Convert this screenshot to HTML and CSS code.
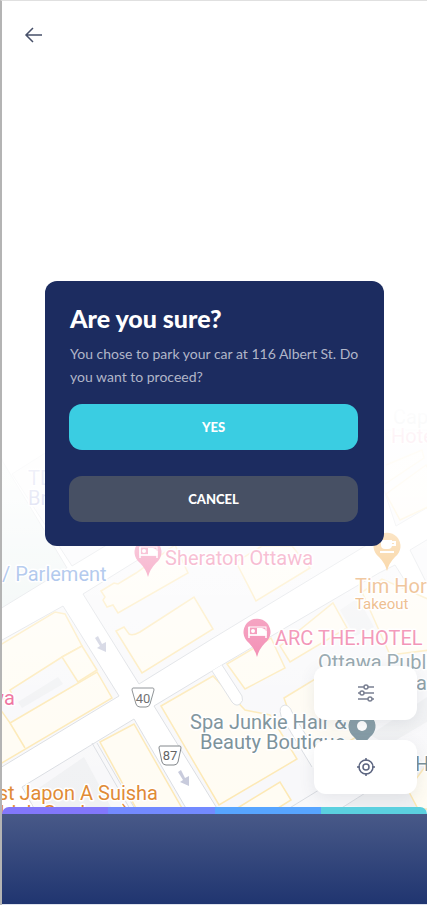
FILE: index.html
```html
<!DOCTYPE html>
<html lang="en">
<head>
<meta charset="utf-8">
<meta name="viewport" content="width=device-width, initial-scale=1">
<title>Park your car</title>
<link rel="stylesheet" href="styles.css">
</head>
<body>
<div class="screen">
  <div class="map">
    <svg class="map-art" viewBox="0 0 425 904" preserveAspectRatio="xMidYMax slice" role="img" aria-label="Street map of downtown Ottawa">
      <defs>
        <linearGradient id="fade" x1="0" y1="400" x2="0" y2="806" gradientUnits="userSpaceOnUse">
          <stop offset="0" stop-color="#fff"/>
          <stop offset=".1" stop-color="#fff" stop-opacity=".92"/>
          <stop offset=".22" stop-color="#fff" stop-opacity=".86"/>
          <stop offset=".38" stop-color="#fff" stop-opacity=".62"/>
          <stop offset=".58" stop-color="#fff" stop-opacity=".38"/>
          <stop offset=".75" stop-color="#fff" stop-opacity=".15"/>
          <stop offset="1" stop-color="#fff" stop-opacity=".02"/>
        </linearGradient>
        <g id="bed" fill="none" stroke="#fff" stroke-width="1.500">
          <path d="M-8-5V6M9-1V6M-8 3H9"/>
          <path d="M0-4H5Q9-3 9 0V3H0Z" fill="#fff" stroke="none"/>
          <rect x="-8" y="-5" width="17" height="8" stroke-width="1"/>
          <circle cx="-4" cy="-1" r="2" fill="#fff" stroke="none"/>
        </g>
        <path id="pin" d="M0 25Q-2 17-8 11A13.500 13.500 0 1 1 8 11Q2 17 0 25Z"/>
        <path id="arrow" d="M-6-6L-3-8 1 0 5-2 5 8-4 4-1 2Z" fill="#c5c8da"/>
      </defs>
      <g transform="translate(-2 -1)">
        <g class="block">
          <path d="M-5 440L3 462 67 568-5 612Z" fill="#edf4f3"/>
          <path d="M12 474L50 450 110 543 72 566Z"/>
          <path d="M83 594L175 537H380L342 560 215 637 139 684Z"/>
          <path d="M-5 644L63 606 119 696-5 771Z"/>
          <path d="M22 787L134 719 187 810H35Z"/>
          <path d="M154 706L222 665 379 573 395 565 430 620V810H218Z"/>
          <path d="M410 550L430 538V590Z"/>
          <path d="M384 490L396 526 430 506V430H384Z"/>
        </g>
        <g class="lot">
          <path d="M18 702L58 677 63 684 22 708Z"/>
          <path d="M340 610L358 598 374 627 355 636Z"/>
          <path d="M36 790L84 757 112 809H46Z"/>
          <path d="M345 806L420 758 430 775V810Z"/>
          <path d="M370 735L430 695V720L388 745Z"/>
        </g>
        <g class="building">
          <path d="M101 591L114 583 118 584 136 573 175 545 188 573 118 613 113 605 107 607 103 600 105 597Z"/>
          <path d="M116 631L124 627 129 634Q133 636 140 632L194 597 213 629 142 673Z"/>
          <path d="M-5 648L55 612 65 614 82 646 62 657 10 690 12 694 -5 704Z"/>
          <path d="M62 657L82 646 97 670 78 682Z"/>
          <path d="M10 723L97 672 112 698 -5 767V702Z"/>
          <path d="M10 723L25 748"/>
          <path d="M100 742L134 724 183 810H137Z"/>
          <path d="M161 706L213 676 245 710 270 715 297 759 219 805Z"/>
          <path d="M227 664L271 638 285 668 245 689Z"/>
          <path d="M280 646L333 603 347 628 290 662Z"/>
          <path d="M236 562L256 601 310 568 292 546 262 546Z"/>
          <path d="M284 698L325 673 360 735 330 752 297 735Z"/>
          <path d="M362 592L382 579 430 600V650L390 655Z"/>
          <path d="M386 494L426 465 430 472V506L400 520Z"/>
          <path d="M386 465L422 450 424 458 385 484"/>
          <path d="M236 809L280 782 291 800 275 810Z"/>
          <path d="M408 790L418 809H430V760Z"/>
        </g>
        <g class="lane">
          <path d="M212 671L232 702Q236 707 240 704 244 701 242 696L222 665"/>
          <path d="M312 767L281 716Q278 706 285 705 290 706 292 712L330 775"/>
          <path d="M92 743L130 809M288 809L340 777M340 809L370 790M97 743L135 809"/>
        </g>
        <g class="shield">
          <path d="M133 688H153Q154 688 154 690L150 704Q149 707 146 707H140Q137 707 136 704L132 690Q132 688 133 688Z"/>
          <path d="M160 746H180Q181 746 181 748L178 762Q177 765 174 765H166Q163 765 162 762L159 748Q159 746 160 746Z"/>
          <text x="143" y="703">40</text>
          <text x="170" y="760">87</text>
        </g>
        <use href="#arrow" x="101" y="644"/>
        <use href="#arrow" x="184" y="778"/>
        <g fill="#ee6095">
          <use href="#pin" x="148" y="552"/>
          <use href="#pin" x="257" y="632"/>
        </g>
        <use href="#bed" x="148" y="552"/>
        <use href="#bed" x="257" y="632"/>
        <use href="#pin" x="387" y="546" fill="#f3a73d"/>
        <path d="M381 540H392V545Q392 549 388 549H385Q381 549 381 545Z" fill="#fff"/>
        <path d="M391 542H395V545H391M380 552H394" fill="none" stroke="#fff" stroke-width="2"/>
        <use href="#pin" x="362" y="726" fill="#78919c"/>
        <circle cx="362" cy="726" r="5" fill="#fff"/>
        <g class="label">
          <g fill="#7680cc"><text x="28" y="485">TD</text><text x="28" y="505">Br</text></g>
          <g fill="#ec5c90">
            <text x="393" y="424" fill="#8b9499">Cap</text>
            <text x="391" y="443">Hotel</text>
            <text x="165" y="565">Sheraton Ottawa</text>
            <text x="275" y="645">ARC THE.HOTEL</text>
            <text x="15" y="705" text-anchor="end">Ottawa</text>
          </g>
          <text x="2" y="581" fill="#5487d8">/ Parlement</text>
          <g fill="#df872f">
            <text x="355" y="593">Tim Hortons</text>
            <text x="355" y="609" class="small">Takeout</text>
            <text x="158" y="800" text-anchor="end">st Japon A Suisha</text>
            <text x="129" y="820" text-anchor="end">(Irish Gardens )</text>
          </g>
          <g fill="#6f8791">
            <text x="318" y="669">Ottawa Public</text>
            <text x="416" y="690">ain</text>
            <text x="190" y="729">Spa Junkie Hair &amp;</text>
            <text x="200" y="749">Beauty Boutique</text>
            <text x="415" y="771">H</text>
          </g>
        </g>
        <rect y="370" width="430" height="540" fill="url(#fade)"/>
      </g>
    </svg>
  </div>

  <header class="topbar">
    <button class="back" type="button" aria-label="Back">
      <svg width="18" height="16" viewBox="0 0 18 16"><path d="M18 8H2M9 1L2 8L9 15"/></svg>
    </button>
  </header>

  <main class="content">
    <section class="dialog" role="dialog" aria-labelledby="dialog-title">
      <h1 id="dialog-title">Are you sure?</h1>
      <p>You chose to park your car at 116 Albert St. Do you want to proceed?</p>
      <div class="actions">
        <button class="action yes" type="button">YES</button>
        <button class="action cancel" type="button">CANCEL</button>
      </div>
    </section>
    <div class="map-tools">
      <button class="tool" type="button" aria-label="Filters">
        <svg width="18" height="18" viewBox="0 0 18 18"><path d="M1 3H7M11 3H17M1 9H3M7 9H17M1 15H11M15 15H17"/><circle cx="9" cy="3" r="2"/><circle cx="5" cy="9" r="2"/><circle cx="13" cy="15" r="2"/></svg>
      </button>
      <button class="tool locate" type="button" aria-label="My location">
        <svg width="20" height="20" viewBox="0 0 20 20"><circle cx="10" cy="10" r="7"/><circle cx="10" cy="10" r="3"/><path d="M10 1V4M10 16V19M1 10H4M16 10H19"/></svg>
      </button>
    </div>
  </main>

  <footer class="sheet">
    <div class="strip"><span></span><span></span><span></span><span></span></div>
    <div class="sheet-body"></div>
  </footer>
</div>
</body>
</html>
```

FILE: styles.css
```css
* { box-sizing: border-box; }

body {
  margin: 0;
  background: #fff;
  font-family: Lato, "Open Sans", sans-serif;
}

.screen {
  position: relative;
  display: flex;
  flex-direction: column;
  min-height: 100vh;
  border-top: 1px solid #e0e0e0;
  border-left: 2px solid #b4b4b4;
  overflow: hidden;
}

.map { position: absolute; inset: 0; }
.map-art { display: block; width: 100%; height: 100%; }

.block { fill: #f8f8fa; stroke: #d9dce1; stroke-width: 1; }
.lot { fill: #f0f1f3; }
.building { fill: #fffcf3; stroke: #fde8b2; stroke-width: 1.500; }
.lane { fill: #fff; stroke: #d9dce1; }
.shield { fill: #fff; stroke: #777c80; stroke-width: 1; }
.shield text {
  fill: #555;
  stroke: none;
  font: 13px Roboto, sans-serif;
  text-anchor: middle;
}
.label {
  font: 20px Roboto, sans-serif;
  stroke: #fff;
  stroke-width: 3px;
  stroke-linejoin: round;
  paint-order: stroke;
}
.label .small { font-size: 15px; }

button {
  border: 0;
  padding: 0;
  font: inherit;
  cursor: pointer;
}
button svg { display: block; fill: none; }

.topbar, .content, .sheet { position: relative; }

.topbar { padding: 17px 14px; }
.back {
  display: grid;
  place-items: center;
  width: 34px;
  height: 34px;
  background: none;
}
.back svg { stroke: #475069; stroke-width: 1.500; }

.content {
  flex: 1;
  display: flex;
  flex-direction: column;
  justify-content: flex-end;
  gap: 120px;
  padding-bottom: 13px;
}

.dialog {
  margin: 0 43px;
  padding: 24px;
  border-radius: 12px;
  background: #1c2c60;
  color: #fff;
}
.dialog h1 {
  margin: 0 0 11px;
  font-size: 25px;
  line-height: 26px;
  font-weight: 900;
}
.dialog p {
  margin: 0 0 16px;
  font-size: 14px;
  line-height: 23px;
  color: #b1b6c8;
}
.dialog h1, .dialog p { padding-left: 1px; }

.actions { display: grid; gap: 26px; margin-right: 2px; }
.action {
  height: 46px;
  border-radius: 13px;
  color: #fff;
  font-size: 13px;
  font-weight: 900;
}
.yes { background: #3acde2; }
.cancel { background: #475064; }

.map-tools {
  align-self: flex-end;
  display: grid;
  gap: 20px;
  margin-right: 10px;
}
.tool {
  display: grid;
  place-items: center;
  width: 103px;
  height: 54px;
  border-radius: 12px;
  background: #fff;
  box-shadow: 0 4px 16px rgba(70, 80, 100, .1);
}
.tool svg { stroke: #7a8092; stroke-width: 1.500; }
.locate svg { stroke: #5c6580; }

.strip {
  display: grid;
  grid-template-columns: repeat(4, 1fr);
  height: 7px;
  border-radius: 8px 8px 0 0;
  overflow: hidden;
}
.strip span:nth-child(1) { background: #8277fb; }
.strip span:nth-child(2) { background: #738aff; }
.strip span:nth-child(3) { background: #57a5ff; }
.strip span:nth-child(4) { background: #5bd0df; }

.sheet { border-bottom: 1px solid #dfe3ee; }
.sheet-body {
  height: 90px;
  background: linear-gradient(#485988, #203570);
}
```
